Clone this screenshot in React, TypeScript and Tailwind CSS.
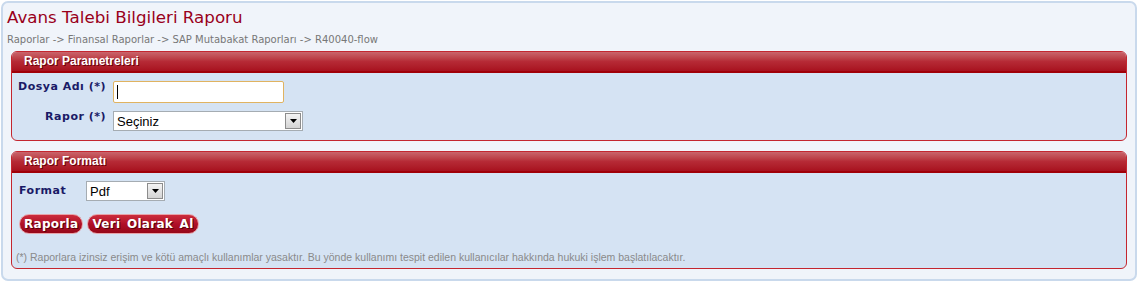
import React from 'react';

const verdana = { fontFamily: '"DejaVu Sans", Verdana, sans-serif' };
const arial = { fontFamily: '"Liberation Sans", Arial, sans-serif' };

const PanelHeader: React.FC<{ title: string }> = ({ title }) => (
    <div
        className="h-[21px] rounded-t-[5px] border-b-2 border-[#a00008] bg-gradient-to-b from-[#c9646b] via-[#b62a36] to-[#a8101e] pl-[12px] text-[12px] font-bold leading-[19px] text-white [text-shadow:1px_1px_0_#6a0008]"
        style={arial}
    >
        {title}
    </div>
);

const Panel: React.FC<{ title: string; className?: string; children: React.ReactNode }> = ({ title, className, children }) => (
    <div className={`mx-[8px] rounded-[6px] border border-[#c4262f] bg-[#d5e3f3] ${className ?? ''}`}>
        <PanelHeader title={title} />
        {children}
    </div>
);

const FakeSelect: React.FC<{ value: string; width: string }> = ({ value, width }) => (
    <div className={`flex h-[20px] ${width} items-center border border-[#a5acb2] bg-white`}>
        <span className="flex-1 pl-[3px] text-[13px] leading-none text-black" style={arial}>
            {value}
        </span>
        <span className="mr-[1px] flex h-[16px] w-[16px] items-center justify-center border border-[#8c8c8c] bg-gradient-to-b from-[#f4f4f4] to-[#d4d4d4]">
            <svg width="7" height="4" viewBox="0 0 7 4">
                <path d="M0 0h7L3.5 4z" fill="#000" />
            </svg>
        </span>
    </div>
);

const RedButton: React.FC<{ label: string }> = ({ label }) => (
    <button
        className="h-[20px] rounded-full border border-[#e7a3a9] bg-gradient-to-b from-[#cc2c3c] via-[#b00e28] to-[#960818] px-[4px] text-[12px] font-bold leading-none tracking-[0.3px] text-white [word-spacing:2px] [text-shadow:1px_1px_0_#5a0008]"
        style={verdana}
    >
        {label}
    </button>
);

const labelCls = 'text-[11px] font-bold tracking-[0.5px] text-[#1a1a66]';

export default function App() {
    return (
        <div className="h-[283px] w-[1138px] bg-white pl-[1px] pt-[1px]">
            <div className="h-[280px] w-[1136px] rounded-[7px] border-2 border-[#c9d9ec] bg-[#f0f4fa]">
                <h1 className="pl-[4px] pt-[4px] text-[16.7px] font-normal leading-[20px] text-[#99001a]" style={verdana}>
                    Avans Talebi Bilgileri Raporu
                </h1>
                <p className="mt-[7px] pl-[4px] text-[10px] leading-[12px] text-[#777]" style={verdana}>
                    Raporlar -&gt; Finansal Raporlar -&gt; SAP Mutabakat Raporları -&gt; R40040-flow
                </p>

                <Panel title="Rapor Parametreleri" className="mt-[5px] h-[90px]">
                    <div className="grid grid-cols-[88px_auto] items-start gap-x-[7px] gap-y-[8px] pl-[6px] pt-[8px]">
                        <span className={`text-right leading-[11px] ${labelCls}`} style={verdana}>
                            Dosya Adı (*)
                        </span>
                        <div className="flex h-[22px] w-[171px] items-center rounded-[2px] border border-[#e0b361] bg-white pl-[3px]">
                            <span className="h-[14px] w-px bg-black" />
                        </div>
                        <span className={`text-right leading-[11px] ${labelCls}`} style={verdana}>
                            Rapor (*)
                        </span>
                        <FakeSelect value="Seçiniz" width="w-[190px]" />
                    </div>
                </Panel>

                <Panel title="Rapor Formatı" className="mt-[10px] h-[118px]">
                    <div className="flex items-center pl-[7px] pt-[8px]">
                        <span className={`w-[67px] ${labelCls}`} style={verdana}>
                            Format
                        </span>
                        <FakeSelect value="Pdf" width="w-[79px]" />
                    </div>
                    <div className="mt-[13px] flex gap-[4px] pl-[7px]">
                        <RedButton label="Raporla" />
                        <RedButton label="Veri Olarak Al" />
                    </div>
                    <p className="mt-[17px] pl-[4px] text-[10.5px] leading-[13px] text-[#8a8a8a]" style={arial}>
                        (*) Raporlara izinsiz erişim ve kötü amaçlı kullanımlar yasaktır. Bu yönde kullanımı tespit edilen kullanıcılar hakkında hukuki işlem başlatılacaktır.
                    </p>
                </Panel>
            </div>
        </div>
    );
}
